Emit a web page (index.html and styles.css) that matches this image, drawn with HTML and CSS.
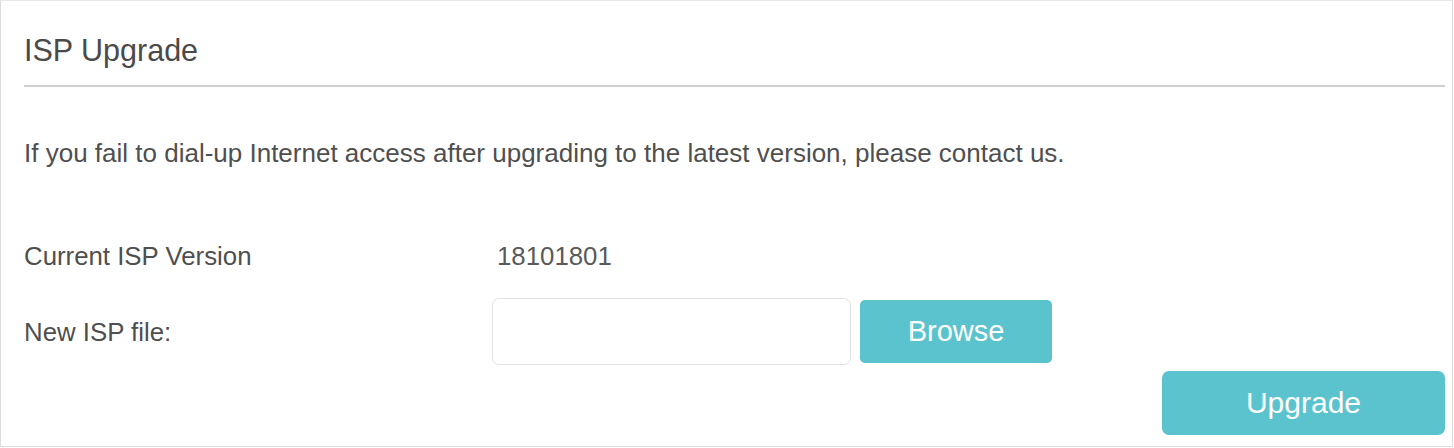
FILE: index.html
```html
<!DOCTYPE html>
<html>
<head>
<meta charset="utf-8">
<link rel="stylesheet" href="styles.css">
</head>
<body>
<div class="panel">
  <div class="header"><h1 class="title">ISP Upgrade</h1></div>
  <p class="note">If you fail to dial-up Internet access after upgrading to the latest version, please contact us.</p>
  <div class="form">
    <div class="row">
      <span class="label">Current ISP Version</span>
      <span class="value">18101801</span>
    </div>
    <div class="row row-file">
      <span class="label">New ISP file:</span>
      <div class="file">
        <div class="input"></div>
        <button class="btn btn-browse">Browse</button>
      </div>
    </div>
  </div>
  <div class="actions">
    <button class="btn btn-upgrade">Upgrade</button>
  </div>
</div>
</body>
</html>
```
FILE: styles.css
```css
* { box-sizing: border-box; }
html, body { margin: 0; padding: 0; background: #fff; }
body {
  width: 1454px;
  height: 448px;
  font-family: "Liberation Sans", Arial, sans-serif;
  color: #555;
}
.panel {
  width: 1453px;
  height: 447px;
  border: 1px solid #dcdcdc;
  border-top-color: #e8e8e8;
  padding: 0 7px 0 23px;
}
.header {
  border-bottom: 2px solid #cfcfcf;
  height: 86px;
  padding-top: 29px;
}
.title {
  margin: 0;
  font-weight: normal;
  font-size: 30.5px;
  line-height: 40px;
  color: #4a4a4a;
}
.note {
  margin: 51px 0 0;
  font-size: 26px;
  line-height: 30px;
  color: #4f4f4f;
}
.form { margin-top: 73px; }
.row {
  display: grid;
  grid-template-columns: 468px 1fr;
  align-items: center;
  font-size: 25.8px;
}
.label { color: #4f4f4f; line-height: 30px; }
.value { padding-left: 5px; color: #5a5a5a; line-height: 30px; }
.row-file { margin-top: 27px; }
.file { display: flex; align-items: center; gap: 9px; }
.input {
  width: 359px;
  height: 67px;
  border: 1px solid #e2e2e2;
  border-radius: 7px;
  background: #fff;
}
.btn {
  border: none;
  background: #5bc3ce;
  color: #fff;
  font-family: "Liberation Sans", Arial, sans-serif;
  border-radius: 5px;
  padding: 0;
  cursor: pointer;
}
.btn-browse {
  width: 192px;
  height: 63px;
  font-size: 29px;
}
.actions {
  display: flex;
  justify-content: flex-end;
  margin-top: 6px;
}
.btn-upgrade {
  width: 283px;
  height: 64px;
  font-size: 30px;
  border-radius: 7px;
}
```
